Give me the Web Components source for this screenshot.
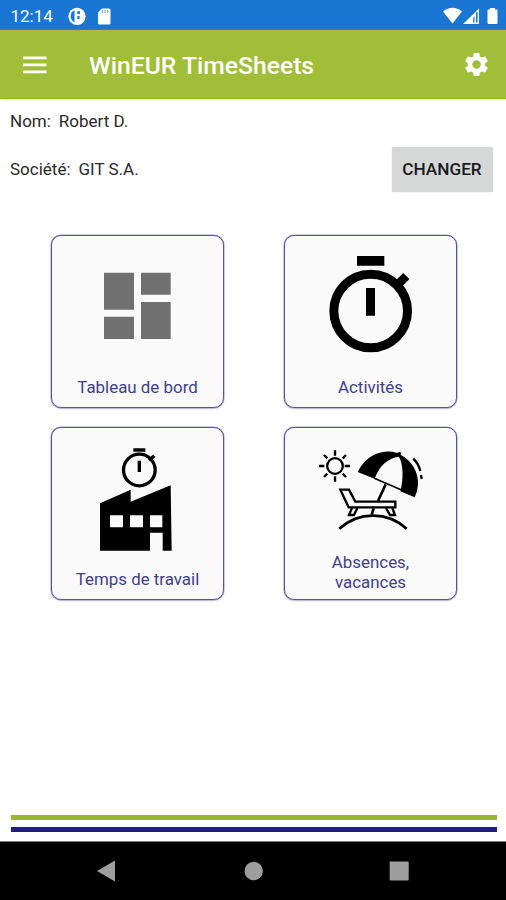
<!DOCTYPE html>
<html lang="fr">
<head>
<meta charset="utf-8">
<title>WinEUR TimeSheets</title>
<style>
  html, body {
    margin: 0;
    height: 100%;
  }
  body {
    --green: #a0be37;
    --navy: #1d2080;
    background-color: #fff;
    color: #2a2a2a;
    display: flex;
    flex-direction: column;
    font-family: Roboto, "Liberation Sans", sans-serif;
    font-size: 17px;
    height: 900px;
    overflow: hidden;
    width: 506px;
  }
</style>
</head>
<body>
<status-bar>12:14</status-bar>
<app-bar>WinEUR TimeSheets</app-bar>
<info-row label="Nom:">Robert D.</info-row>
<info-row label="Société:" style="--row-height: 46px">GIT S.A.
  <flat-button slot="action">CHANGER</flat-button>
</info-row>
<tile-grid>
  <menu-tile>
    <svg slot="icon" viewBox="36 33 513 402" fill="#707070">
      <path d="M192 143h90v111h-90zM303 143h89v66h-89zM192 275h90v67h-90zM303 231h89v111h-89z"/>
    </svg>
    Tableau de bord
  </menu-tile>
  <menu-tile>
    <svg slot="icon" viewBox="30 33 513 402">
      <path d="M246 93h82v29h-82zM273 189h27v83h-27z"/>
      <circle cx="287" cy="258" r="110.5" fill="none" stroke="#000" stroke-width="27"/>
      <path d="M366 181L394 153" stroke="#000" stroke-width="26"/>
    </svg>
    Activités
  </menu-tile>
  <menu-tile>
    <svg slot="icon" viewBox="36 24 513 402">
      <path d="M280 85h36v10h-36zM293 122h10v34h-10z"/>
      <circle cx="298" cy="150" r="47.5" fill="none" stroke="#000" stroke-width="10"/>
      <path d="M327 121L343 107" stroke="#000" stroke-width="10"/>
      <path fill-rule="evenodd" d="M180 250L272 209V245L392 196L395 392H368V338H330V392H180zM210 286v36h39v-36zM270 286v36h39v-36zM330 286v36h37v-36z"/>
    </svg>
    Temps de travail
  </menu-tile>
  <menu-tile style="--label-bottom: 7px">
    <svg slot="icon" viewBox="30 24 513 402" fill="none" stroke="#000" stroke-width="7">
      <circle cx="180" cy="138" r="23.5"/>
      <path d="M180 91v16M180 169v16M132 138h16M209 138h16M147 105l10 10M203 161l10 10M147 171l10-10M203 115l10-10"/>
      <path fill="#000" stroke="none" d="M248 156C264 122 294 98 330 95Q350 94 368 99L372 95L379 98L377 105C411 121 432 159 429 195Q427 216 419 232L376 214C386 175 385 135 372 110C339 114 312 138 299 176z"/>
      <path stroke-width="5" d="M298 175L378 209"/>
      <path d="M415 116Q431 132 436 153M438 165l2 12"/>
      <path d="M332 193L309 243M296 265L290 284" stroke-width="8"/>
      <path d="M196 209h26L241 245H361V262H221z"/>
      <path d="M231 264L222 285H237L247 264M333 264L345 285H360L352 264"/>
      <path d="M193 326Q238 287 292 287Q350 286 395 326" stroke-width="8"/>
    </svg>
    Absences,<br>vacances
  </menu-tile>
</tile-grid>
<footer-lines></footer-lines>
<nav-bar></nav-bar>

<script>
const statusBar = document.createElement('template')
statusBar.innerHTML = `
<style>
  :host {
    align-items: center;
    background-color: #1976d2;
    box-sizing: border-box;
    color: #fff;
    display: flex;
    flex: none;
    font-size: 17px;
    height: 30px;
    padding: 1px 6px 0 10.5px;
  }
  span {
    flex: none;
    width: 56px;
  }
  svg {
    display: block;
    fill: #fff;
    flex: none;
  }
  .system {
    margin-left: auto;
  }
</style>
<span><slot></slot></span>
<svg width="46" height="20" viewBox="66 5 46 20">
  <circle cx="76" cy="15.300" r="8.600"/>
  <path fill="#1976d2" d="M73.500 9.300V21.300Q69.700 19.300 69.700 15.300Q69.700 11 73.500 9.300zM76.300 10.200H79V13H76.300zM76.300 15H78.600V18H76.300z"/>
  <path d="M101 7.500h7q1.500 0 1.500 1.500v13q0 1.500-1.500 1.500h-9.500q-1.500 0-1.500-1.500V11.500z"/>
  <path fill="#7fb0e4" d="M101 9h1.200v3H101zM103.500 9h1.200v3h-1.200zM106 9h1.200v3H106z"/>
</svg>
<svg class="system" width="60" height="20" viewBox="440 5 60 20">
  <path d="M443 10.500Q452.500 3 462 10.500L452.500 22.500z"/>
  <path fill-rule="evenodd" d="M463 23L479 7.500V23zM473.200 16.800V21.500H474.500V15.500zM476 12V21.500H477.600V10.500z"/>
  <path d="M490 7h5v1.500h1.500q1 0 1 1V22q0 1-1 1h-8q-1 0-1-1V9.500q0-1 1-1h1.500z"/>
</svg>
`
class StatusBar extends HTMLElement {
  constructor () {
    super()
    this.attachShadow({ mode: 'open' })
    this.shadowRoot.appendChild(statusBar.content.cloneNode(true))
  }
}

const appBar = document.createElement('template')
appBar.innerHTML = `
<style>
  :host {
    align-items: center;
    background-color: var(--green);
    border-bottom: 1px solid #93b126;
    box-sizing: border-box;
    box-shadow: 0 1px 2px #e4eac6;
    color: #fff;
    display: flex;
    flex: none;
    height: 69px;
    margin-bottom: 6px;
    padding: 2px 15px 0 23px;
  }
  h1 {
    flex: 1;
    font-size: 24.700px;
    font-weight: 500;
    margin: 0 0 0 42px;
    white-space: nowrap;
  }
  svg {
    display: block;
    fill: #fff;
    flex: none;
  }
  .gear {
    margin-top: -2px;
  }
</style>
<svg width="24" height="18" viewBox="0 0 24 18"><path d="M0 .5h23.500v2.700H0zM0 7.500h23.500v2.700H0zM0 14.500h23.500v2.700H0z"/></svg>
<h1><slot></slot></h1>
<svg class="gear" width="29" height="29" viewBox="0 0 24 24"><path d="M19.140 12.940c.04-.3.060-.61.060-.94 0-.32-.02-.64-.07-.94l2.030-1.580c.18-.14.23-.41.120-.61l-1.920-3.320c-.12-.22-.37-.29-.59-.22l-2.390.96c-.5-.38-1.030-.7-1.620-.94l-.36-2.540c-.04-.24-.24-.41-.48-.41h-3.840c-.24 0-.43.170-.47.410l-.36 2.540c-.59.240-1.130.570-1.620.940l-2.390-.96c-.22-.08-.47 0-.59.220L2.740 8.870c-.12.210-.08.470.120.610l2.030 1.580c-.05.300-.09.630-.09.940s.02.640.070.940l-2.030 1.580c-.18.140-.23.410-.12.610l1.920 3.320c.12.220.370.290.590.220l2.390-.96c.5.380 1.030.700 1.620.940l.36 2.540c.05.240.240.410.480.410h3.840c.24 0 .44-.17.470-.41l.36-2.540c.59-.24 1.130-.56 1.620-.94l2.390.96c.22.080.470 0 .590-.22l1.920-3.320c.12-.22.070-.47-.12-.61l-2.010-1.580zM12 15.500a3.500 3.500 0 1 1 0-7 3.500 3.500 0 0 1 0 7z"/></svg>
`
class AppBar extends HTMLElement {
  constructor () {
    super()
    this.attachShadow({ mode: 'open' })
    this.shadowRoot.appendChild(appBar.content.cloneNode(true))
  }
}

const infoRow = document.createElement('template')
infoRow.innerHTML = `
<style>
  :host {
    align-items: center;
    box-sizing: border-box;
    display: flex;
    flex: none;
    gap: 8px;
    height: var(--row-height, 31px);
    margin-bottom: 10px;
    padding: 0 13px 0 10px;
  }
  .action {
    margin-left: auto;
  }
</style>
<span class="label"></span>
<span><slot></slot></span>
<div class="action"><slot name="action"></slot></div>
`
class InfoRow extends HTMLElement {
  constructor () {
    super()
    this.attachShadow({ mode: 'open' })
    this.shadowRoot.appendChild(infoRow.content.cloneNode(true))
  }

  connectedCallback () {
    this.shadowRoot.querySelector('.label').textContent = this.getAttribute('label')
  }
}

const flatButton = document.createElement('template')
flatButton.innerHTML = `
<style>
  :host {
    display: block;
  }
  button {
    background-color: #d6d7d7;
    border: none;
    border-radius: 2px;
    box-shadow: 0 0 1px #bbb;
    color: #1b1b1b;
    display: block;
    font: 500 17.200px Roboto, "Liberation Sans", sans-serif;
    height: 45px;
    padding: 0 1px 0 0;
    width: 101px;
  }
</style>
<button><slot></slot></button>
`
class FlatButton extends HTMLElement {
  constructor () {
    super()
    this.attachShadow({ mode: 'open' })
    this.shadowRoot.appendChild(flatButton.content.cloneNode(true))
  }
}

const tileGrid = document.createElement('template')
tileGrid.innerHTML = `
<style>
  :host {
    column-gap: 60px;
    display: grid;
    flex: 1;
    grid-template-columns: 173px 173px;
    grid-template-rows: 173px 173px;
    padding: 33px 0 0 51px;
    row-gap: 19px;
  }
</style>
<slot></slot>
`
class TileGrid extends HTMLElement {
  constructor () {
    super()
    this.attachShadow({ mode: 'open' })
    this.shadowRoot.appendChild(tileGrid.content.cloneNode(true))
  }
}

const menuTile = document.createElement('template')
menuTile.innerHTML = `
<style>
  :host {
    background-color: #fafafa;
    border: 1px solid #55559c;
    border-radius: 10px;
    box-shadow: 0 0 0 .5px #a3a3cc, 0 1px 2px #c9c9dc;
    box-sizing: border-box;
    color: #3f3f8d;
    display: flex;
    flex-direction: column;
    height: 173px;
    position: relative;
  }
  ::slotted(svg) {
    display: block;
    height: 134px;
    left: 0;
    position: absolute;
    top: 0;
    width: 171px;
  }
  .label {
    font-size: 16.900px;
    line-height: 20px;
    margin-top: auto;
    padding-bottom: var(--label-bottom, 10px);
    text-align: center;
  }
</style>
<slot name="icon"></slot>
<div class="label"><slot></slot></div>
`
class MenuTile extends HTMLElement {
  constructor () {
    super()
    this.attachShadow({ mode: 'open' })
    this.shadowRoot.appendChild(menuTile.content.cloneNode(true))
  }
}

const footerLines = document.createElement('template')
footerLines.innerHTML = `
<style>
  :host {
    display: flex;
    flex: none;
    flex-direction: column;
    gap: 7px;
    padding: 0 9px 9px 10.500px;
  }
  div {
    background-color: #9db52c;
    height: 5px;
  }
  div + div {
    background-color: var(--navy);
  }
</style>
<div></div>
<div></div>
`
class FooterLines extends HTMLElement {
  constructor () {
    super()
    this.attachShadow({ mode: 'open' })
    this.shadowRoot.appendChild(footerLines.content.cloneNode(true))
  }
}

const navBar = document.createElement('template')
navBar.innerHTML = `
<style>
  :host {
    background-color: #000;
    border-top: 1px solid #777;
    box-sizing: border-box;
    display: block;
    flex: none;
    height: 59px;
  }
  svg {
    display: block;
    fill: #9e9e9e;
  }
</style>
<svg width="506" height="58" viewBox="0 842 506 58">
  <path d="M97 871L115 860.500V881.500z"/>
  <circle cx="253.700" cy="871" r="9.200"/>
  <rect x="389.700" y="861.500" width="19" height="19" rx="1"/>
</svg>
`
class NavBar extends HTMLElement {
  constructor () {
    super()
    this.attachShadow({ mode: 'open' })
    this.shadowRoot.appendChild(navBar.content.cloneNode(true))
  }
}

window.customElements.define('status-bar', StatusBar)
window.customElements.define('app-bar', AppBar)
window.customElements.define('info-row', InfoRow)
window.customElements.define('flat-button', FlatButton)
window.customElements.define('tile-grid', TileGrid)
window.customElements.define('menu-tile', MenuTile)
window.customElements.define('footer-lines', FooterLines)
window.customElements.define('nav-bar', NavBar)
</script>
</body>
</html>
